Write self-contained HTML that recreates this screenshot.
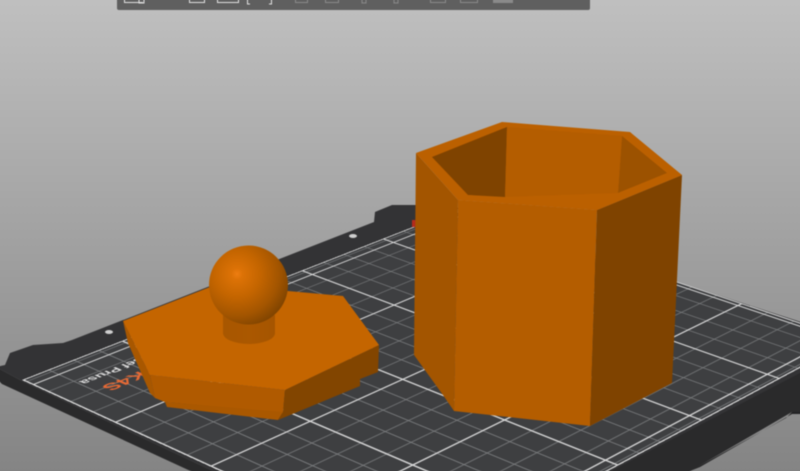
<!DOCTYPE html>
<html><head><meta charset="utf-8"><title>3D view</title>
<style>
html,body{margin:0;padding:0;width:800px;height:471px;overflow:hidden;background:#a0a0a0}
#v{position:relative;width:800px;height:471px;overflow:hidden}
#w{position:absolute;left:-4px;top:-4px;width:808px;height:479px;overflow:hidden;background:linear-gradient(180deg,#c0c0c0 0,#848484 479px);filter:blur(.4px)}
#w>svg{position:absolute;left:0;top:0}
#c{position:absolute;left:0;top:0;width:808px;height:479px;overflow:hidden}
#g{position:absolute;left:4px;top:4px;width:1000px;height:1000px;transform-origin:0 0;transform:matrix3d(.52227,-.13217,0,.00018577,.34716,.10791,0,-.00013949,0,0,1,0,22,380,0,1);background:#3e3f41}
#g svg{position:absolute;left:0;top:0}
.t{position:absolute;width:300px;text-align:right;transform:rotate(180deg);font-family:"Liberation Sans",sans-serif;font-weight:bold;white-space:nowrap}
</style></head><body><div id="v"><div id="w">
<svg width="808" height="479" viewBox="-4 -4 808 479">
<polygon fill="#2a2a2b" points="-4,367 -4,378 2,384 210,480 675,480 792,412 804,412 804,358 594,480 232,480 22,381"/>
<polygon fill="#333335" points="-4,367 5,365 10,353 33,345 63,343 72,340 374,222 375,212 392,205 450,205 677,282 804,323 804,371 594,480 232,480 22,381"/>
<polygon fill="#232324" points="786,418 792,412 804,412 804,414 792,414 700,467 690,471"/>
</svg>
<div id="c"><div id="g">
<svg width="1000" height="1000" viewBox="0 0 1000 1000">
<defs>
<pattern id="a" width="50" height="1000" patternUnits="userSpaceOnUse"><rect width="2.2" height="1000" fill="#7c7e80"/></pattern>
<pattern id="b" width="1000" height="61.25" y="10" patternUnits="userSpaceOnUse"><rect width="1000" height="2.2" fill="#7c7e80"/></pattern>
</defs>
<rect width="1000" height="1000" fill="url(#a)"/>
<rect width="1000" height="1000" fill="url(#b)"/>
<g stroke="#dcdcdc" stroke-width="3.4">
<line x1="200" y1="0" x2="200" y2="1000"/><line x1="400" y1="0" x2="400" y2="1000"/><line x1="600" y1="0" x2="600" y2="1000"/><line x1="800" y1="0" x2="800" y2="1000"/>
<line x1="0" y1="255" x2="1000" y2="255"/><line x1="0" y1="500" x2="1000" y2="500"/><line x1="0" y1="745" x2="1000" y2="745"/>
<line x1="0" y1="30" x2="1000" y2="30"/><line x1="0" y1="972" x2="1000" y2="972"/><line x1="988" y1="0" x2="988" y2="1000"/>
<rect x="1.500" y="1.500" width="997" height="997" fill="none"/>
</g>
</svg>
<div class="t" style="left:55px;top:74px;font-size:27px;line-height:30px;color:#e4e4e4">Josef Prusa</div>
<div class="t" style="left:66px;top:118px;font-size:40px;line-height:40px;color:#ea6a34">MK4S</div>
</div></div>
<svg width="808" height="479" viewBox="-4 -4 808 479">
<defs>
<radialGradient id="s" gradientUnits="userSpaceOnUse" cx="237" cy="274" r="58">
<stop offset="0" stop-color="#ee7e12"/><stop offset=".1" stop-color="#dc7206"/><stop offset=".4" stop-color="#c46500"/><stop offset=".72" stop-color="#a35500"/><stop offset="1" stop-color="#784000"/>
</radialGradient>
<linearGradient id="k" x1="0" x2="1" y1="0" y2="0">
<stop offset="0" stop-color="#a85700"/><stop offset=".5" stop-color="#ab5800"/><stop offset="1" stop-color="#a55500"/>
</linearGradient>
</defs>
<ellipse cx="353" cy="236" rx="4" ry="2" fill="#cfcfcf"/>
<ellipse cx="109" cy="332" rx="4" ry="2" fill="#cfcfcf"/>
<rect x="412" y="220" width="4" height="7" fill="#b52a1c"/>
<!-- lid -->
<polygon fill="#a85700" points="123,321 150,375 155,398 150,393 128,343"/>
<polygon fill="#b05a00" points="150,375 285,390 283,413 165,402 155,398"/>
<polygon fill="#aa5800" points="165,402 167,407 278,420 283,412"/>
<polygon fill="#824500" points="285,390 379,345 378,372 360,379 360,386 278,420 283,412"/>
<polygon fill="#c46500" points="123,321 210,287 288,291 343,296 379,345 285,390 150,375"/>
<path d="M223,315V333A26,11 0 0 0 275,333V315Z" fill="url(#k)"/>
<circle cx="248.500" cy="285" r="39.500" fill="url(#s)"/>
<!-- cup -->
<polygon fill="#a35500" points="416,153 458,200 454,411 443,395 414,355"/>
<polygon fill="#b45d00" points="458,200 597,210 590,426 454,411"/>
<polygon fill="#7f4300" points="597,210 682,175 672,383 590,426"/>
<polygon fill="#bb6000" points="416,153 502,122 630,132 682,175 597,210 458,200"/>
<polygon fill="#b45d00" points="432,157 507,127 622,136 667,173 594,205 468,195"/>
<polygon fill="#7f4300" points="432,157 507,127 505,198 468,195"/>
<polygon fill="#9c5200" points="622,136 667,173 618,193"/>
<polygon fill="#b45d00" points="507,127 622,136 618,193 505,198"/>
<polygon fill="#bb6000" points="468,195 505,197 618,193 667,173 682,175 597,210 458,200"/>
<!-- toolbar -->
<rect x="117" y="-8" width="473" height="18" rx="2" fill="#5f5f5f"/>
<g fill="none" stroke="#e2e2e2" stroke-width="1">
<path d="M124.500,-4V2.500H143M139,-4V3H144V-4"/>
<path d="M189.500,-4V2.500H204.500V-4"/>
<path d="M217.500,-4V2.500H238.500V-4"/>
<path d="M247.500,-4V4H250M271.500,-4V4H269"/>
</g>
<g fill="none" stroke="#8a8a8a" stroke-width="1">
<path d="M295.500,-4V2.500H307.500V-4"/><path d="M325.500,-4V2.500H338.500V-4"/>
<path d="M362,-4V3H366V-4"/><path d="M394,-4V3H398V-4"/>
<path d="M430.500,-4V2.500H445.500V-4"/><path d="M460.500,-4V2.500H477.500V-4"/>
</g>
<rect x="493" y="-4" width="20" height="7" fill="#8a8a8a"/>
</svg>
</div></div></body></html>
